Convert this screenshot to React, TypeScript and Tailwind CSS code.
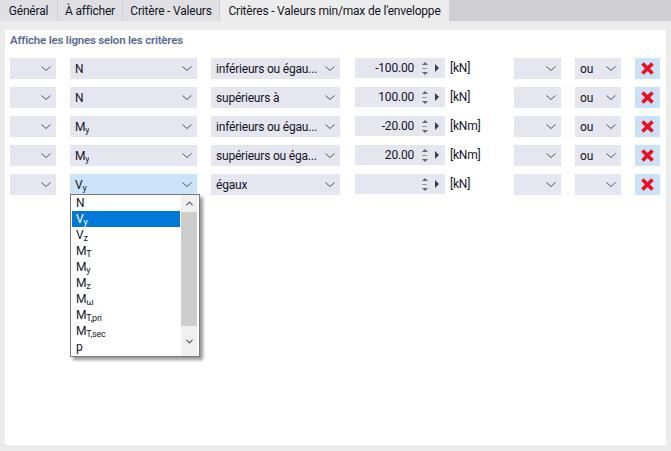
import { ChevronDown, ChevronUp } from "lucide-react";
import type { ReactNode } from "react";

const Sub = ({ children }: { children: ReactNode }) => (
  <span className="text-[9px] relative top-[2px]">{children}</span>
);

const Arrow = () => (
  <svg width="10" height="6" viewBox="0 0 10 6" className="shrink-0 mr-[3px]">
    <path d="M0.5 0.5 L5 4.5 L9.5 0.5" fill="none" stroke="#55555e" strokeWidth="1" />
  </svg>
);

const Select = ({
  className,
  children,
  active,
}: {
  className: string;
  children?: ReactNode;
  active?: boolean;
}) => (
  <div
    className={`${className} h-[21px] shrink-0 flex items-center justify-between pl-[5px] pr-[2px] ${
      active ? "bg-[#cce4f7]" : "bg-[#e6e6f0]"
    }`}
  >
    <span className="truncate">{children}</span>
    <Arrow />
  </div>
);

const Spin = ({ value }: { value: string }) => (
  <div className="w-[90px] h-5 shrink-0 bg-[#e6e6f0] flex items-center">
    <span className="w-[59px] text-right">{value}</span>
    <div className="ml-[7px] w-[7px] flex flex-col items-center gap-[3px]">
      <div className="w-0 h-0 border-x-[3px] border-x-transparent border-b-[3px] border-b-[#66666e]" />
      <div className="w-[5px] h-px bg-[#9a9aa2]" />
      <div className="w-0 h-0 border-x-[3px] border-x-transparent border-t-[3px] border-t-[#66666e]" />
    </div>
    <div className="ml-[7px] w-0 h-0 border-y-[4px] border-y-transparent border-l-[4px] border-l-[#3c3c44]" />
  </div>
);

const Delete = () => (
  <div className="w-[25px] h-[21px] shrink-0 bg-[#c9e2f6] flex items-center justify-center">
    <svg width="13" height="13" viewBox="0 0 13 13">
      <path d="M1.5 1.5 L11.5 11.5 M11.5 1.5 L1.5 11.5" stroke="#f00f1e" strokeWidth="3.6" />
    </svg>
  </div>
);

const Vy = () => (
  <>
    V<Sub>y</Sub>
  </>
);
const My = () => (
  <>
    M<Sub>y</Sub>
  </>
);

const rows: { comp: ReactNode; rel: string; value: string; unit: string; op: string }[] = [
  { comp: "N", rel: "inférieurs ou égau...", value: "-100.00", unit: "[kN]", op: "ou" },
  { comp: "N", rel: "supérieurs à", value: "100.00", unit: "[kN]", op: "ou" },
  { comp: <My />, rel: "inférieurs ou égau...", value: "-20.00", unit: "[kNm]", op: "ou" },
  { comp: <My />, rel: "supérieurs ou éga...", value: "20.00", unit: "[kNm]", op: "ou" },
  { comp: <Vy />, rel: "égaux", value: "", unit: "[kN]", op: "" },
];

const options: { label: ReactNode; selected?: boolean }[] = [
  { label: "N" },
  { label: <Vy />, selected: true },
  { label: <>V<Sub>z</Sub></> },
  { label: <>M<Sub>T</Sub></> },
  { label: <My /> },
  { label: <>M<Sub>z</Sub></> },
  { label: <>M<Sub>ω</Sub></> },
  { label: <>M<Sub>T,pri</Sub></> },
  { label: <>M<Sub>T,sec</Sub></> },
  { label: "p" },
];

const tabs = [
  { label: "Général", w: "w-[57px]" },
  { label: "À afficher", w: "w-[64px]" },
  { label: "Critère - Valeurs", w: "w-[96px]" },
];

export default function App() {
  return (
    <div className="w-[671px] h-[451px] bg-[#ececec] flex flex-col overflow-hidden text-[12px] tracking-[-0.2px] text-[#14141f] font-['Roboto','Open_Sans',sans-serif]">
      <div className="h-[21px] bg-[#cfcfd3] flex shrink-0">
        {tabs.map((t) => (
          <div
            key={t.label}
            className={`${t.w} mr-px bg-[#e0e0e4] flex items-center justify-center whitespace-nowrap`}
          >
            {t.label}
          </div>
        ))}
        <div className="w-[229px] bg-[#ececec] flex items-center justify-center whitespace-nowrap">
          Critères - Valeurs min/max de l'enveloppe
        </div>
      </div>

      <div className="mt-[9px] mx-[5px] h-[415px] bg-white pt-[2px] pl-[5px] relative">
        <div className="h-[17px] flex items-center font-semibold text-[11.5px] text-[#5a6b95]">
          Affiche les lignes selon les critères
        </div>

        <div className="mt-[9px] flex flex-col gap-2">
          {rows.map((r, i) => (
            <div key={i} className="flex items-start">
              <Select className="w-[46px]" />
              <Select className="w-[127px] ml-[14px]" active={i === 4}>
                {r.comp}
              </Select>
              <Select className="w-[129px] ml-[14px]">{r.rel}</Select>
              <div className="ml-[15px]">
                <Spin value={r.value} />
              </div>
              <div className="w-[69px] pl-[5px] h-5 flex items-center shrink-0">{r.unit}</div>
              <Select className="w-[47px]" />
              <Select className="w-[46px] ml-[14px]">{r.op}</Select>
              <div className="ml-[14px]">
                <Delete />
              </div>
            </div>
          ))}
        </div>

        {/* liste ouverte */}
        <div className="absolute left-[65px] top-[164px] w-[130px] h-[163px] bg-white border border-[#7a7a7a] shadow-[3px_3px_3px_rgba(0,0,0,0.4)] flex pl-px">
          <div className="w-[108px] flex flex-col">
            {options.map((o, i) => (
              <div
                key={i}
                className={`h-4 shrink-0 flex items-center pl-[4px] whitespace-nowrap ${
                  o.selected ? "bg-[#0078d7] text-white" : ""
                }`}
              >
                <span>{o.label}</span>
              </div>
            ))}
          </div>
          <div className="ml-px w-[16px] flex flex-col bg-[#f0f0f0]">
            <div className="h-[17px] flex items-center justify-center shrink-0">
              <ChevronUp size={11} strokeWidth={2.5} className="text-[#555]" />
            </div>
            <div className="h-[114px] bg-[#cdcdcd] shrink-0" />
            <div className="flex-1 flex items-center justify-center">
              <ChevronDown size={11} strokeWidth={2.5} className="text-[#555]" />
            </div>
          </div>
        </div>
      </div>
    </div>
  );
}
